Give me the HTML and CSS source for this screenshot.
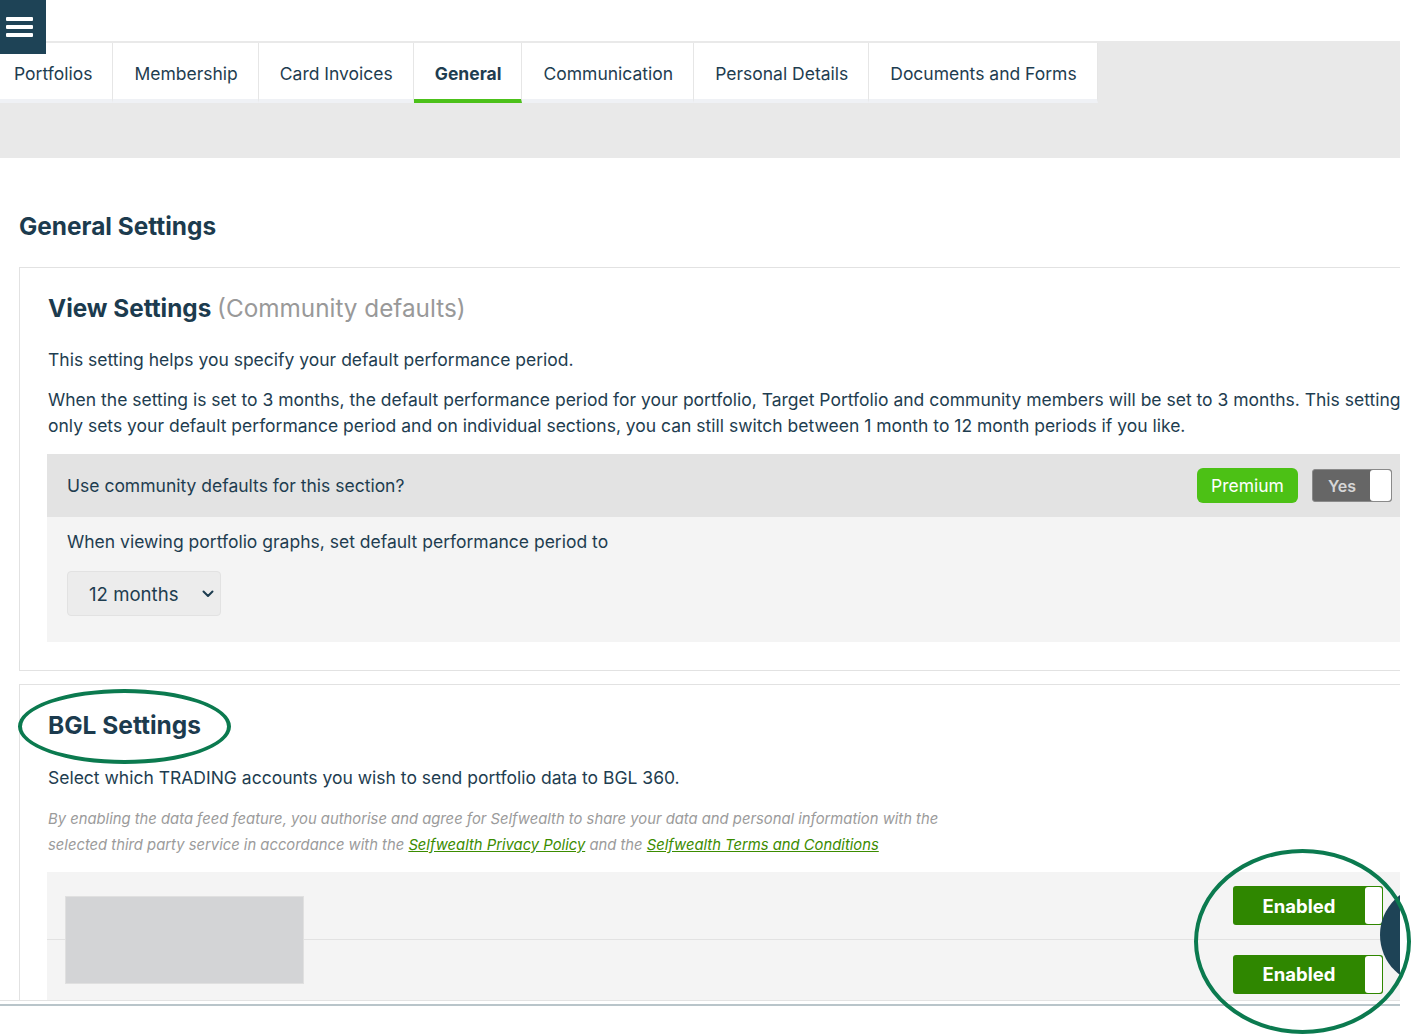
FILE: index.html
```html
<!DOCTYPE html>
<html lang="en">
<head>
<meta charset="utf-8">
<title>General Settings</title>
<link rel="stylesheet" href="styles.css">
</head>
<body>
<div class="shot">
  <div class="viewport">
    <header class="topbar"></header>
    <nav class="tabbar">
      <ul class="tabs">
        <li class="tab tab-first">Portfolios</li>
        <li class="tab">Membership</li>
        <li class="tab">Card Invoices</li>
        <li class="tab active">General</li>
        <li class="tab">Communication</li>
        <li class="tab">Personal Details</li>
        <li class="tab">Documents and Forms</li>
      </ul>
    </nav>
    <main class="content">
      <h1 class="page-title">General Settings</h1>
      <section class="card card-view">
        <h2 class="card-title">View Settings <span class="muted">(Community defaults)</span></h2>
        <p class="p1">This setting helps you specify your default performance period.</p>
        <p class="p2">When the setting is set to 3 months, the default performance period for your portfolio, Target Portfolio and community members will be set to 3 months. This setting only sets your default performance period and on individual sections, you can still switch between 1 month to 12 month periods if you like.</p>
        <div class="panel">
          <div class="panel-head">
            <span>Use community defaults for this section?</span>
            <div class="actions">
              <span class="btn-premium">Premium</span>
              <span class="switch switch-yes"><span class="switch-label">Yes</span><span class="knob"></span></span>
            </div>
          </div>
          <div class="panel-body">
            <div class="panel-text">When viewing portfolio graphs, set default performance period to</div>
            <div class="select">
              <span>12 months</span>
              <svg class="chev" width="12" height="8" viewBox="0 0 12 8"><path d="M1.5 1.5 L6 6 L10.5 1.5" fill="none" stroke="#1d3d50" stroke-width="2" stroke-linecap="round" stroke-linejoin="round"/></svg>
            </div>
          </div>
        </div>
      </section>
      <section class="card card-bgl">
        <h2 class="card-title bgl-title">BGL Settings</h2>
        <p class="p1 bgl-lead">Select which TRADING accounts you wish to send portfolio data to BGL 360.</p>
        <p class="note">By enabling the data feed feature, you authorise and agree for Selfwealth to share your data and personal information with the<br>selected third party service in accordance with the <a href="#">Selfwealth Privacy Policy</a> and the <a href="#">Selfwealth Terms and Conditions</a></p>
        <div class="accounts">
          <div class="account-row row-sep">
            <span class="switch switch-on"><span class="switch-label">Enabled</span><span class="knob"></span></span>
          </div>
          <div class="account-row">
            <span class="switch switch-on"><span class="switch-label">Enabled</span><span class="knob"></span></span>
          </div>
          <div class="logo-placeholder"></div>
        </div>
      </section>
    </main>
    <div class="fab"></div>
    <button class="menu-btn" aria-label="Menu">
      <span></span><span></span><span></span>
    </button>
  </div>
  <div class="bottom-rule"></div>
  <div class="ring ring-title"></div>
  <div class="ring ring-toggles"></div>
</div>
</body>
</html>
```

FILE: styles.css
```css
* { box-sizing: border-box; }
html, body { margin: 0; padding: 0; background: #fff; }
body {
  font-family: Inter, "Noto Sans", "Liberation Sans", sans-serif;
  color: #1e3d50;
}
.shot { position: relative; width: 1412px; height: 1035px; overflow: hidden; }
.viewport {
  position: relative;
  width: 1400px;
  height: 1001px;
  overflow: hidden;
  border-bottom: 1px solid #e3e3e3;
}
.bottom-rule { height: 2px; margin-top: 3px; width: 1400px; background: #b9c5ca; }

.topbar { height: 41px; background: #fff; }
.tabbar { background: #e9e9e9; padding: 2px 0 55px; }
.tabs { list-style: none; margin: 0; padding: 0; display: flex; }
.tab {
  height: 60px;
  padding: 4px 20px 0 21px;
  display: flex;
  align-items: center;
  background: #fff;
  font-size: 17.5px;
  color: #1e3d50;
  border-right: 1px solid #e6e6e6;
  border-bottom: 4px solid #eff1f5;
}
.tab-first { padding-left: 14px; }
.tab.active { font-weight: 700; border-bottom-color: #4cc11a; }

.menu-btn {
  position: absolute;
  left: 0; top: 0;
  width: 46px; height: 54px;
  border: 0; padding: 0;
  background: #1e4356;
  display: flex; flex-direction: column; justify-content: center; align-items: flex-start;
  gap: 4px;
  padding-left: 6px;
}
.menu-btn span { display: block; width: 27px; height: 4px; background: #fff; border-radius: 1px; }

.content { padding: 0 0 0 19px; width: 1460px; }
.page-title { margin: 53px 0 26px 0; font-size: 24.4px; line-height: 30px; font-weight: 700; color: #1c3b4e; }
.card {
  width: 1421px;
  border: 1px solid #e2e2e2;
  padding: 25px 27px 28px 27px;
}
.card-title { margin: 0; font-size: 24.3px; line-height: 30px; font-weight: 700; color: #1c3b4e; padding-left: 1px; }
.muted { font-weight: 400; color: #999; }
p { margin: 0; font-size: 17.5px; line-height: 26px; padding-left: 1px; }
.p1 { margin-top: 24px; }
.p2 { margin-top: 14px; }

.panel { margin-top: 15px; }
.panel-head {
  height: 63px;
  background: #e3e3e3;
  display: flex; align-items: center; justify-content: space-between;
  padding: 0 20px 0 20px;
  font-size: 17.5px;
}
.actions { display: flex; align-items: center; gap: 14px; }
.btn-premium {
  width: 101px; height: 35px;
  background: #4cc115; color: #fff;
  border-radius: 6px;
  display: flex; align-items: center; justify-content: center;
  font-size: 17.5px;
}
.switch { position: relative; display: flex; align-items: center; }
.switch-yes {
  width: 80px; height: 33px;
  background: #666; border: 1px solid #8a8a8a; border-radius: 3px;
}
.switch-yes .switch-label { width: 58px; text-align: center; color: #d6d6d6; font-size: 16px; font-weight: 600; }
.switch-yes .knob {
  position: absolute; right: 0; top: 0; bottom: 0; width: 21px;
  background: #fff; border-radius: 3px;
}
.panel-body { background: #f4f4f4; padding: 12px 20px 26px 20px; }
.panel-text { font-size: 17.5px; line-height: 26px; }
.select {
  margin-top: 16px;
  width: 154px; height: 45px;
  background: #ececec; border: 1px solid #e2e2e2; border-radius: 4px;
  display: flex; align-items: center; justify-content: space-between;
  padding: 0 6px 0 21px;
  font-size: 18.6px;
}
.chev { display: block; }

.card-bgl { margin-top: 13px; padding-top: 24px; height: 400px; }
.bgl-title { font-size: 24.5px; line-height: 32px; }
.bgl-lead { margin-top: 24px; }
.note { margin-top: 15px; font-size: 14.8px; line-height: 26px; font-style: italic; color: #9b9b9b; }
.note a { color: #3b8c00; text-decoration: underline; }
.accounts { position: relative; margin-top: 14px; background: #f4f4f4; }
.account-row { height: 68px; display: flex; align-items: center; justify-content: flex-end; padding-right: 29px; }
.row-sep { border-bottom: 1px solid #e2e2e2; }
.logo-placeholder {
  position: absolute; left: 18px; top: 24px;
  width: 239px; height: 88px;
  background: #d3d4d6; border: 1px solid #e0e0e0;
}
.switch-on {
  width: 150px; height: 39px;
  background: #2f8700; border-radius: 3px;
}
.switch-on .switch-label { width: 132px; text-align: center; color: #fff; font-size: 18.5px; font-weight: 700; }
.switch-on .knob {
  position: absolute; right: 1px; top: 1px; bottom: 1px; width: 17px;
  background: #fff; border-radius: 3px;
}

.fab {
  position: absolute; left: 1380px; top: 885px;
  width: 100px; height: 100px; border-radius: 50%;
  background: #1e4356;
}
.ring { position: absolute; border: 4px solid #0b7a4f; border-radius: 50%; pointer-events: none; }
.ring-title { left: 18px; top: 689px; width: 213px; height: 75px; }
.ring-toggles { left: 1194px; top: 849px; width: 217px; height: 185px; }
```
